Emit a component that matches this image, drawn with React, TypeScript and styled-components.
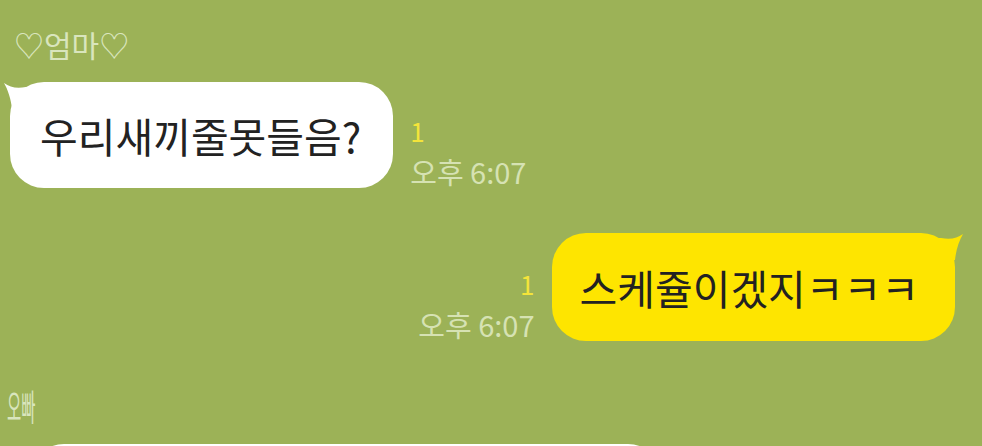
import styled, { createGlobalStyle } from 'styled-components';

const GlobalStyle = createGlobalStyle`
  html, body {
    margin: 0;
    padding: 0;
    background: #9cb257;
    font-family: "Noto Sans CJK KR", "Noto Sans", sans-serif;
  }
`;

const Screen = styled.div`
  width: 982px;
  height: 446px;
  overflow: hidden;
  background: #9cb257;
  display: flex;
  flex-direction: column;
`;

const SenderName = styled.div<{ $squeeze?: number }>`
  color: #d9e5bd;
  font-size: 30px;
  line-height: 36px;
  transform: scaleX(${({ $squeeze }) => $squeeze ?? 1});
  transform-origin: left center;
`;

const Row = styled.div<{ $mine?: boolean }>`
  display: flex;
  align-items: flex-end;
  justify-content: ${({ $mine }) => ($mine ? 'flex-end' : 'flex-start')};
  gap: 17px;
`;

const Bubble = styled.div<{ $mine?: boolean }>`
  position: relative;
  background: ${({ $mine }) => ($mine ? '#fee500' : '#ffffff')};
  color: #222222;
  font-size: 41px;
  line-height: ${({ $mine }) => ($mine ? '108px' : '106px')};
  height: ${({ $mine }) => ($mine ? '108px' : '106px')};
  padding: ${({ $mine }) => ($mine ? '0 36px 0 28px' : '0 32px 0 30px')};
  border-radius: 34px;
  white-space: nowrap;
`;

const Tail = styled.svg<{ $mine?: boolean }>`
  position: absolute;
  top: 1px;
  width: 26px;
  height: 26px;
  ${({ $mine }) => ($mine ? 'right: -8px; transform: scaleX(-1);' : 'left: -6px;')}
`;

const Meta = styled.div<{ $mine?: boolean }>`
  display: flex;
  flex-direction: column;
  align-items: ${({ $mine }) => ($mine ? 'flex-end' : 'flex-start')};
  margin-bottom: -4px;
`;

const Unread = styled.span`
  color: #f4e43a;
  font-size: 26px;
  line-height: 38px;
`;

const Time = styled.span`
  color: #d6e2b3;
  font-size: 29px;
  line-height: 42px;
`;

const Incoming = styled.section<{ $top: number; $gap: number }>`
  display: flex;
  flex-direction: column;
  gap: ${({ $gap }) => $gap}px;
  padding-top: ${({ $top }) => $top}px;
  padding-left: 10px;
`;

const Outgoing = styled.section`
  padding-right: 27px;
  margin-top: 45px;
`;

const BubbleTail = ({ mine, color }: { mine?: boolean; color: string }) => (
  <Tail $mine={mine} viewBox="0 0 26 26">
    <path d="M0 0 C6 4 12 6 22 4 L26 4 L26 26 L8 26 C7 16 4 7 0 0 Z" fill={color} />
  </Tail>
);

export default function App() {
  return (
    <Screen>
      <GlobalStyle />
      <Incoming $top={26} $gap={20}>
        <SenderName style={{ marginLeft: 4 }}>♡엄마♡</SenderName>
        <Row>
          <Bubble>
            <BubbleTail color="#ffffff" />
            우리새끼줄못들음?
          </Bubble>
          <Meta>
            <Unread>1</Unread>
            <Time>오후 6:07</Time>
          </Meta>
        </Row>
      </Incoming>
      <Outgoing>
        <Row $mine>
          <Meta $mine>
            <Unread>1</Unread>
            <Time>오후 6:07</Time>
          </Meta>
          <Bubble $mine>
            <BubbleTail mine color="#fee500" />
            스케쥴이겠지ㅋㅋㅋ
          </Bubble>
        </Row>
      </Outgoing>
      <Incoming $top={46} $gap={21}>
        <SenderName $squeeze={0.43} style={{ marginLeft: -3, fontSize: 36 }}>오빠</SenderName>
        <Row>
          <Bubble style={{ marginLeft: 20, width: 570 }} />
        </Row>
      </Incoming>
    </Screen>
  );
}
